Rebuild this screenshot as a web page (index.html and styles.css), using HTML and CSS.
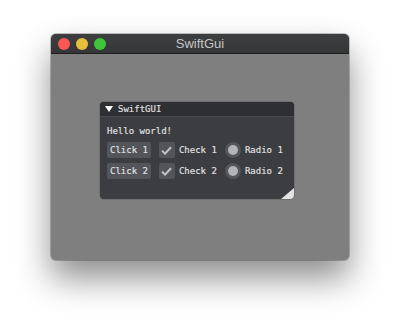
FILE: index.html
```html
<!DOCTYPE html>
<html>
  <head>
    <meta charset="UTF-8" />
    <title>SwiftGui</title>
    <link rel="stylesheet" href="styles.css">
  </head>
  <body>
    <div class="window">
      <div class="titlebar">
        <div class="lights">
          <span class="light red"></span>
          <span class="light yellow"></span>
          <span class="light green"></span>
        </div>
        <div class="title">SwiftGui</div>
      </div>
      <div class="content">
        <div class="panel">
          <div class="panel-header">
            <span class="arrow"></span>
            <span>SwiftGUI</span>
          </div>
          <div class="panel-body">
            <div class="text-row">Hello world!</div>
            <div class="row">
              <div class="button">Click 1</div>
              <div class="item">
                <span class="checkbox">
                  <svg width="11" height="9" viewBox="0 0 11 9">
                    <path d="M1 4.6 L4 7.6 L10 1.2" fill="none" stroke="#c2c3c5" stroke-width="2" />
                  </svg>
                </span>
                <span>Check 1</span>
              </div>
              <div class="item">
                <span class="radio"></span>
                <span>Radio 1</span>
              </div>
            </div>
            <div class="row">
              <div class="button">Click 2</div>
              <div class="item">
                <span class="checkbox">
                  <svg width="11" height="9" viewBox="0 0 11 9">
                    <path d="M1 4.6 L4 7.6 L10 1.2" fill="none" stroke="#c2c3c5" stroke-width="2" />
                  </svg>
                </span>
                <span>Check 2</span>
              </div>
              <div class="item">
                <span class="radio"></span>
                <span>Radio 2</span>
              </div>
            </div>
          </div>
          <span class="grip"></span>
        </div>
      </div>
    </div>
  </body>
</html>
```

FILE: styles.css
```css
html {
  background: #ffffff;
}

body {
  margin: 0;
  min-height: 327px;
  box-sizing: border-box;
  padding: 34px 0 0 51px;
  font-family: "DejaVu Sans Mono", "Liberation Mono", monospace;
}

.window {
  width: 298px;
  height: 226px;
  display: flex;
  flex-direction: column;
  border-radius: 5px;
  overflow: hidden;
  background: #7f7f7f;
  box-shadow: 0 0 0 1px rgba(0, 0, 0, 0.22), 0 18px 34px rgba(0, 0, 0, 0.45);
}

.titlebar {
  height: 19px;
  position: relative;
  display: flex;
  align-items: center;
  justify-content: center;
  background: linear-gradient(#3d3e40, #353638);
  border-bottom: 1px solid #1e1e1f;
}

.lights {
  position: absolute;
  left: 7px;
  top: 4px;
  display: flex;
  gap: 6px;
}

.light {
  width: 12px;
  height: 12px;
  border-radius: 50%;
}

.red {
  background: #fc5753;
}

.yellow {
  background: #e8bf3a;
}

.green {
  background: #3fc43a;
}

.title {
  font-family: "Liberation Sans", Arial, sans-serif;
  font-size: 13px;
  color: #c6c6c6;
}

.content {
  flex: 1;
  padding: 48px 0 0 49px;
}

.panel {
  position: relative;
  width: 194px;
  height: 97px;
  border-radius: 4px;
  overflow: hidden;
  background: #3c3d41;
  color: #e2e2e2;
  font-size: 9px;
  -webkit-text-stroke: 0.15px #e2e2e2;
  box-shadow: 0 0 0 1px rgba(0, 0, 0, 0.12);
}

.panel-header {
  height: 14px;
  display: flex;
  align-items: center;
  gap: 5px;
  padding-left: 5px;
  background: #2e2f32;
  border-bottom: 1px solid #4a4b4f;
}

.arrow {
  width: 0;
  height: 0;
  border-left: 4px solid transparent;
  border-right: 4px solid transparent;
  border-top: 6px solid #ffffff;
}

.panel-body {
  padding: 6px 0 0 7px;
}

.text-row {
  height: 16px;
  line-height: 16px;
  margin-bottom: 3px;
}

.row {
  display: flex;
  align-items: center;
  gap: 8px;
  height: 16px;
  margin-bottom: 5px;
}

.button {
  height: 16px;
  line-height: 16px;
  padding: 0 3px;
  border-radius: 2px;
  background: #53555a;
}

.item {
  display: flex;
  align-items: center;
  gap: 4px;
}

.checkbox {
  width: 16px;
  height: 16px;
  display: flex;
  align-items: center;
  justify-content: center;
  border-radius: 2px;
  background: #53555a;
}

.radio {
  width: 16px;
  height: 16px;
  display: flex;
  align-items: center;
  justify-content: center;
  border-radius: 50%;
  background: #53555a;
}

.radio::after {
  content: "";
  width: 10px;
  height: 10px;
  border-radius: 50%;
  background: #b3b4b6;
}

.grip {
  position: absolute;
  right: 0;
  bottom: 0;
  width: 0;
  height: 0;
  border-left: 13px solid transparent;
  border-bottom: 11px solid #e3e3e3;
}
```
